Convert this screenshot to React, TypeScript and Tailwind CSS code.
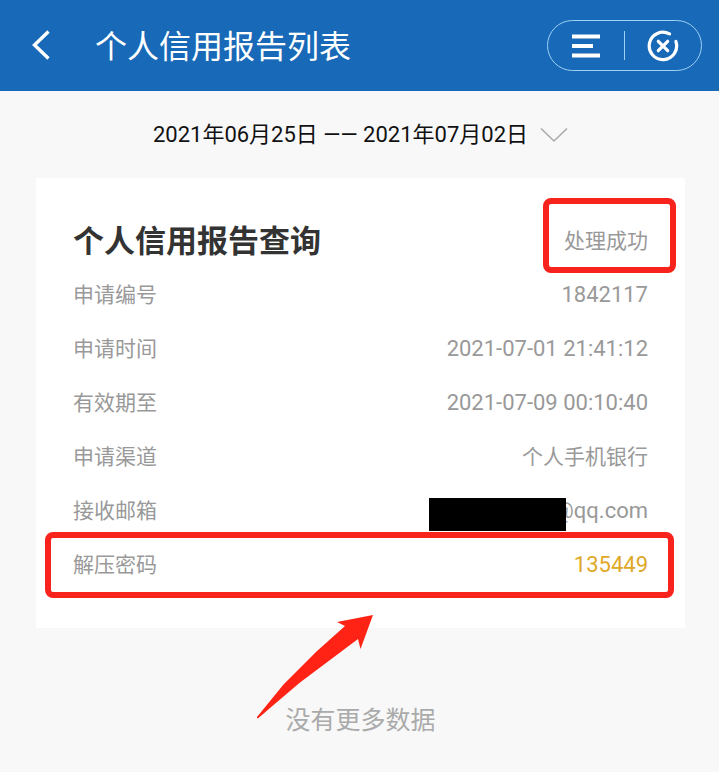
const rows = [
  { label: '申请编号', value: '1842117' },
  { label: '申请时间', value: '2021-07-01 21:41:12' },
  { label: '有效期至', value: '2021-07-09 00:10:40' },
  { label: '申请渠道', value: '个人手机银行', cjk: true },
];

function Header() {
  return (
    <header className="flex h-[91px] items-center bg-[#1869b7] pl-[30px] pr-[17px] text-white">
      <button aria-label="返回" className="mr-[42px]">
        <svg width="23" height="32" viewBox="0 0 23 32" fill="none" stroke="currentColor" strokeWidth="3.4">
          <path d="M18.500 1.500 4.500 15l14 13.500" />
        </svg>
      </button>
      <h1 className="flex-1 pt-0.5 text-[32px] leading-[48px]">个人信用报告列表</h1>
      <div className="flex h-[51px] w-[155px] items-center rounded-full border border-[#9fd0f5]">
        <button aria-label="菜单" className="flex flex-1 justify-center">
          <svg width="28" height="24" viewBox="0 0 28 24" fill="none" stroke="currentColor" strokeWidth="3.8">
            <path d="M0 2.5h28M0 12h21M0 21.5h28" />
          </svg>
        </button>
        <span className="h-[29px] w-px bg-[#9fd0f5]" />
        <button aria-label="关闭" className="flex flex-1 justify-center">
          <svg width="32" height="32" viewBox="0 0 32 32" fill="none" stroke="currentColor" strokeWidth="3.2" strokeLinecap="round">
            <path d="M22.5 3.9A13.7 13.7 0 1 0 28.9 11.5" />
            <path d="m11.3 11.3 9.4 9.4M20.7 11.3l-9.4 9.4" />
          </svg>
        </button>
      </div>
    </header>
  );
}

export default function App() {
  return (
    <div className="min-h-screen bg-[#f8f8f8] font-[Roboto,'Noto_Sans_CJK_SC',sans-serif]">
      <Header />
      <main className="pl-9 pr-[34px]">
        <button className="mx-auto flex h-[87px] items-center gap-3 text-[22px] text-[#111]">
          <span>2021年06月25日 —— 2021年07月02日</span>
          <svg width="28" height="16" viewBox="0 0 28 16" fill="none" stroke="#aaa" strokeWidth="1.6">
            <path d="m1 1.5 13 12.5L27 1.5" />
          </svg>
        </button>

        <section className="relative bg-white px-[37px] pb-[37px] pt-[35px] text-[21px] text-[#999]">
          <div className="flex h-[54px] items-center justify-between">
            <h2 className="pt-1 text-[31px] font-bold text-[#333]">个人信用报告查询</h2>
            <div className="relative flex h-full items-center pt-1">
              处理成功
              <span className="absolute -bottom-1.5 -left-[21px] -right-7 -top-[15px] rounded-lg border-6 border-[#f8231c]" />
            </div>
          </div>

          <dl>
            {rows.map((row) => (
              <div key={row.label} className="flex h-[54px] items-center justify-between">
                <dt className="pt-1">{row.label}</dt>
                <dd className={row.cjk ? 'pt-1' : 'text-[22px]'}>{row.value}</dd>
              </div>
            ))}
            <div className="relative flex h-[54px] items-center justify-between">
              <dt className="pt-1">接收邮箱</dt>
              <dd className="text-[22px]">@qq.com</dd>
              <span className="absolute right-[82px] top-[15px] h-[33px] w-[137px] bg-black" />
            </div>
            <div className="relative flex h-[54px] items-center justify-between">
              <dt className="pt-1">解压密码</dt>
              <dd className="text-[22px] text-[#dfa826]">135449</dd>
              <span className="absolute -bottom-[7px] -left-7 -right-[26px] -top-[5px] rounded-lg border-6 border-[#f8231c]" />
            </div>
          </dl>

          <svg className="absolute -bottom-[92px] left-[220px]" width="120" height="106" viewBox="0 0 120 106" fill="#ff2315">
            <path d="M117 1 81 8 89 12 60.500 37.500 27.500 70.500 1 103Q.5 105 2.500 104L14 94 44 68.500 74 46 102 25 104.500 35Z" />
          </svg>
        </section>

        <p className="pb-8 pt-[73px] text-center text-[25px] leading-10 text-[#aaa]">没有更多数据</p>
      </main>
    </div>
  );
}
